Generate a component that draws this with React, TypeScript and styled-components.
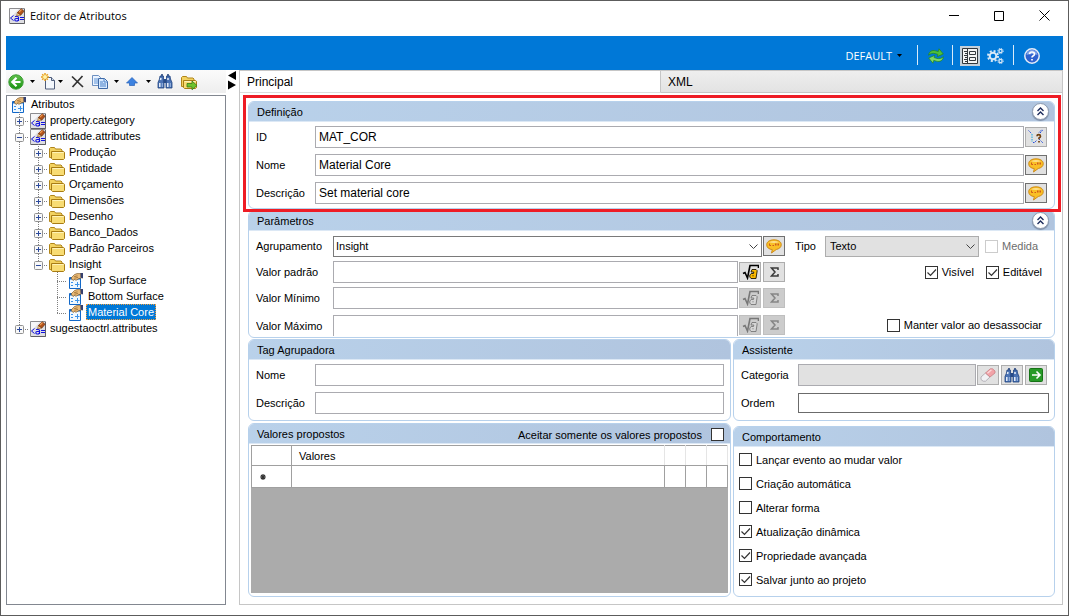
import React, { useState } from "react";
import styled, { createGlobalStyle } from "styled-components";

const uiFont = `"Liberation Sans", Arial, sans-serif`;
const titleFont = `"Open Sans", "Noto Sans", sans-serif`;

const GlobalStyle = createGlobalStyle`
  * { box-sizing: border-box; }
  body { margin: 0; background: #fff; color: #000; font: 11px/16px ${uiFont}; }
  button, input, select { font: inherit; color: inherit; margin: 0; padding: 0; border-radius: 0; }
  svg { display: block; flex: none; }
`;

/* ---------- window frame ---------- */

const Window = styled.div`
  display: flex;
  flex-direction: column;
  min-height: 100vh;
  padding: 0 5px 10px;
  border: 1px solid #5c5c5c;
  background: #fff;
`;

const TitleBar = styled.header`
  display: flex;
  align-items: center;
  height: 35px;
  padding: 0 8px 6px 3px;
`;

const Title = styled.h1`
  flex: 1;
  margin: 0 0 0 5px;
  font: 11px/16px ${titleFont};
`;

const WindowButtons = styled.div`
  display: flex;
  gap: 23px;
`;

const PlainButton = styled.button<{ $w?: number }>`
  display: flex;
  align-items: center;
  justify-content: center;
  width: ${(p) => (p.$w ? `${p.$w}px` : "auto")};
  border: 0;
  background: none;
`;

const Ribbon = styled.div`
  display: flex;
  align-items: center;
  justify-content: flex-end;
  height: 34px;
  padding: 5px 23px 0 0;
  background: #0078d7;
  color: #fff;
`;

const ProfileButton = styled(PlainButton)`
  gap: 5px;
  margin-right: 15px;
  font: 11px/16px ${titleFont};
`;

const RibbonDivider = styled.span<{ $before: number; $after: number }>`
  width: 1px;
  height: 20px;
  margin: 0 ${(p) => p.$after}px 2px ${(p) => p.$before}px;
  background: #d9ebf9;
`;

const RibbonToggle = styled(PlainButton)`
  width: 20px;
  height: 20px;
  margin-right: 7px;
  background: #c5d0da;
`;

const Workspace = styled.main`
  display: flex;
  flex: 1;
  align-items: stretch;
`;

/* ---------- left side ---------- */

const SidePane = styled.aside`
  display: flex;
  flex-direction: column;
  width: 220px;
`;

const SideToolbar = styled.div`
  display: flex;
  align-items: center;
  height: 23px;
  margin-bottom: 2px;
  padding-left: 2px;
  background: linear-gradient(#fbfbfb, #eeeeee);
`;

const ToolButton = styled(PlainButton)<{ $gap: number }>`
  margin-right: ${(p) => p.$gap}px;
`;

const Tree = styled.ul`
  flex: 1;
  margin: 0;
  padding: 0 0 0 3px;
  border: 1px solid #828790;
  list-style: none;
`;

const TreeRow = styled.li`
  display: flex;
  align-items: center;
  height: 16px;
`;

const TreeIcon = styled.span`
  width: 16px;
  height: 15px;
  margin: 1px 2px 0 1px;
`;

const TreeLabel = styled.span<{ $selected?: boolean }>`
  height: 16px;
  padding: 0 1px 0 1px;
  border: 1px ${(p) => (p.$selected ? "dotted #f0a040" : "solid transparent")};
  background: ${(p) => (p.$selected ? "#0078d7" : "none")};
  color: ${(p) => (p.$selected ? "#fff" : "#000")};
  line-height: 14px;
`;

const Splitter = styled.div`
  width: 13px;
  padding: 1px 0 0 1px;
`;

/* ---------- tabs ---------- */

const TabPane = styled.section`
  display: flex;
  flex: 1;
  flex-direction: column;
  min-width: 0;
  border: 1px solid #c6c6c6;
`;

const TabStrip = styled.div`
  display: grid;
  grid-template-columns: 421px 1fr;
  height: 22px;
`;

const Tab = styled.button<{ $active?: boolean }>`
  padding: 1px 7px 0;
  border: 0;
  border-right: ${(p) => (p.$active ? "1px solid #c6c6c6" : "0")};
  border-bottom: 1px solid ${(p) => (p.$active ? "#dcdcdc" : "#c6c6c6")};
  background: ${(p) => (p.$active ? "#fff" : "linear-gradient(#eeeeee, #e3e3e3)")};
  font-size: 12px;
  text-align: left;
`;

const TabPage = styled.div`
  display: flex;
  flex: 1;
  flex-direction: column;
  gap: 1px;
  padding: 8px 7px 7px 8px;
`;

/* ---------- groups ---------- */

const GroupBox = styled.section<{ $grow?: boolean }>`
  display: flex;
  flex: ${(p) => (p.$grow ? "1 1 auto" : "none")};
  flex-direction: column;
  border: 1px solid #b7d1ec;
  border-radius: 6px;
`;

const GroupHeader = styled.header`
  display: flex;
  align-items: center;
  justify-content: space-between;
  height: 20px;
  padding: 0 5px 0 8px;
  border-bottom: 1px solid #dce8f5;
  border-radius: 5px 5px 0 0;
  background: linear-gradient(90deg, #b9d1ea, #b0c4de);
`;

const GroupTitle = styled.h2`
  margin: 0;
  font: inherit;
`;

const CollapseButton = styled.button`
  display: flex;
  align-items: center;
  justify-content: center;
  width: 17px;
  height: 17px;
  border: 1px solid #8d9bb0;
  border-radius: 50%;
  background: #fff;
  box-shadow: 0 1px 1px #7c8ca4;
`;

const GroupBody = styled.div<{ $pad: string; $gap?: number }>`
  display: flex;
  flex: 1;
  flex-direction: column;
  gap: ${(p) => p.$gap ?? 0}px;
  padding: ${(p) => p.$pad};
`;

const HighlightArea = styled.div`
  position: relative;
`;

const HighlightFrame = styled.div`
  position: absolute;
  z-index: 1;
  inset: -6px -6px -3px -5px;
  border: 3px solid #ee1c25;
  pointer-events: none;
`;

const Row = styled.div<{ $gap?: number; $inset?: number }>`
  display: flex;
  align-items: center;
  height: 22px;
  margin-bottom: ${(p) => p.$gap ?? 0}px;
  padding-right: ${(p) => p.$inset ?? 0}px;
`;

const CutRow = styled(Row)`
  align-items: flex-start;
  height: 21px;
  overflow: hidden;
`;

const FieldLabel = styled.label<{ $w: number }>`
  flex: none;
  width: ${(p) => p.$w}px;
  line-height: 22px;
`;

const TextField = styled.input<{ $dark?: boolean }>`
  flex: 1;
  min-width: 0;
  height: 22px;
  padding: 0 3px;
  border: 1px solid ${(p) => (p.$dark ? "#6b6b6b" : "#ababb0")};
  background: #fff;
  font-size: 12px;
  outline: none;
  &:disabled { background: #e1e1e1; }
`;

const ShortField = styled(TextField)`
  height: 20px;
`;

const IconButton = styled.button<{ $dark?: boolean; $gap?: number }>`
  display: flex;
  flex: none;
  align-items: center;
  justify-content: center;
  width: 22px;
  height: 20px;
  margin-left: ${(p) => p.$gap ?? 1}px;
  border: 1px solid ${(p) => (p.$dark ? "#707070" : "#adadad")};
  background: #e1e1e1;
  &:disabled { border-color: #bfbfbf; background: #cccccc; }
`;

const SelectWrap = styled.span<{ $w?: number }>`
  display: grid;
  flex: ${(p) => (p.$w ? "none" : "1")};
  width: ${(p) => (p.$w ? `${p.$w}px` : "auto")};
  height: 21px;
  align-items: center;
  & > * { grid-area: 1 / 1; }
  & > svg { justify-self: end; margin-right: 3px; pointer-events: none; }
`;

const Select = styled.select<{ $gray?: boolean }>`
  width: 100%;
  height: 21px;
  padding: 0 20px 0 ${(p) => (p.$gray ? 4 : 2)}px;
  border: 1px solid ${(p) => (p.$gray ? "#adadad" : "#7a7a7a")};
  background: ${(p) => (p.$gray ? "#e1e1e1" : "#fff")};
  appearance: none;
`;

const ParamSide = styled.div`
  display: flex;
  flex: none;
  align-items: center;
  width: 269px;
  padding-left: 10px;
`;

const ParamChecks = styled(ParamSide)`
  height: 20px;
  justify-content: flex-end;
  padding-right: 12px;
`;

const CheckLabel = styled.label<{ $gap?: number; $muted?: boolean }>`
  display: flex;
  align-items: center;
  gap: 4px;
  height: 13px;
  margin-left: ${(p) => p.$gap ?? 0}px;
  color: ${(p) => (p.$muted ? "#6d6d6d" : "#000")};
`;

const CheckSlot = styled.span`
  display: grid;
  width: 13px;
  height: 13px;
  & > * { grid-area: 1 / 1; }
  & > svg { pointer-events: none; }
`;

const CheckInput = styled.input`
  width: 13px;
  height: 13px;
  border: 1px solid #333;
  background: #fff;
  appearance: none;
  &:disabled { border-color: #cccccc; }
`;

const LowerGrid = styled.div`
  display: grid;
  flex: 1;
  grid-template-columns: 483fr 322fr;
  gap: 2px;
`;

const LowerColumn = styled.div<{ $gap: number }>`
  display: flex;
  flex-direction: column;
  gap: ${(p) => p.$gap}px;
`;

const GridSurface = styled.div`
  flex: 1;
  background: #ababab;
`;

const DataTable = styled.table`
  width: 100%;
  table-layout: fixed;
  border-collapse: collapse;
  background: #fff;
  th { height: 20px; padding: 0 7px; border: 1px solid #a0a0a0; font-weight: 400; text-align: left; }
  th:nth-child(n + 3) { border-right-color: #e5e5e5; border-left-color: #e5e5e5; }
  th:nth-child(2) { border-right-color: #e5e5e5; }
  td { height: 22px; padding: 0 7px; border: 1px solid #a0a0a0; }
`;

/* ---------- icons ---------- */

const Caret = () => (
  <svg width="5" height="3" viewBox="0 0 5 3"><path d="M0 0h5L2.500 3z" fill="#000" /></svg>
);

const Chevron = () => (
  <svg width="11" height="7" viewBox="0 0 11 7"><path d="M1.500 1.500l4 4 4-4" fill="none" stroke="#444" /></svg>
);

const AttrFileIcon = () => (
  <svg width="16" height="16" viewBox="0 0 16 16">
    <path d="M.5 .5h15v15H.5z" fill="#dedee2" stroke="#8c8c90" />
    <path d="M15.500 1v14.500H1" fill="none" stroke="#5f5f63" />
    <path d="M1 1h9L2 9H1z" fill="#f6f6f8" />
    <path d="M4.500 7.500l-3 2.500 3 2.500M11 9.500h4M11 11.500h4" fill="none" stroke="#1212e0" />
    <path d="M6 8.500h2.500q1 0 1 1v3.500M9.500 10.500H7q-1.200 0-1.200 1.200T7 13h1.500l1-1" fill="none" stroke="#1212e0" strokeWidth="1.100" />
    <path d="M7.500 8l1-3.500L12 7z" fill="#f3c98b" stroke="#8a5a2a" strokeWidth=".6" />
    <path d="M8.500 4.500L12.200 .8 15 3.300 11.800 7z" fill="#b4541a" stroke="#6b2f0c" strokeWidth=".8" />
    <path d="M10 4l2.500-2.500" stroke="#ef9a52" strokeWidth="1.200" />
  </svg>
);

const PropertyIcon = () => (
  <svg width="16" height="16" viewBox="0 0 16 16">
    <path d="M1.500 4.500h11v11h-11z" fill="#eff8ff" stroke="#1268c8" />
    <path d="M2 5.500h10" stroke="#1268c8" strokeWidth="2" />
    <path d="M3 9.500h2M3 12.500h2M7 11.500h4.500M9.500 9v5" stroke="#3a93ea" />
    <path d="M3 5L6.500 1.500 9 .6h4l.5 4.400-3 .8-2.500 1.500-1.500-.8L5 7.500z" fill="#e9ba78" stroke="#6f4b1d" strokeWidth=".6" />
    <path d="M12.500 0H15v5.500l-2.500-1z" fill="#35406f" />
    <path d="M6 3.800l3.500-1M6.500 5.300l3.500-1" stroke="#8f6127" strokeWidth=".7" />
  </svg>
);

const FolderIcon = ({ arrow }: { arrow?: boolean }) => (
  <svg width="16" height="16" viewBox="0 0 16 16">
    <path d="M.5 12.500v-9l1-1h4l1 1.500H12l1 1v8.500z" fill="#f3d260" stroke="#b0851a" />
    <path d="M2.500 6.500h12l1 .8v6.200l-1 1h-11l-1-1z" fill="#f8dc74" stroke="#a87c14" />
    <path d="M3.500 7.500h11" stroke="#fff3b8" />
    {arrow && <path d="M6 9.500h5V7l5 4.500-5 4.300V13H6z" fill="#6ec32c" stroke="#38761a" strokeWidth=".8" />}
  </svg>
);

const BackIcon = () => (
  <svg width="16" height="16" viewBox="0 0 16 16">
    <defs><linearGradient id="back" x1="0" y1="0" x2="0" y2="1"><stop offset="0" stopColor="#62c04d" /><stop offset="1" stopColor="#17930f" /></linearGradient></defs>
    <circle cx="8" cy="8" r="7.200" fill="url(#back)" stroke="#3a9c33" />
    <path d="M8.500 3.800L4.300 8l4.200 4.200M4.800 8H12.500" fill="none" stroke="#fff" strokeWidth="2.200" />
  </svg>
);

const NewIcon = () => (
  <svg width="16" height="17" viewBox="0 0 16 17">
    <path d="M4.500 4.500h6l3 3v8.500h-9z" fill="#f4f8fd" stroke="#4f5d7a" />
    <path d="M10.500 4.500v3h3" fill="#cfdced" stroke="#4f5d7a" />
    <path d="M4 0v8M0 4h8M1.200 1.200l5.600 5.600M6.800 1.200L1.200 6.800" stroke="#e9a11d" strokeWidth="1.500" />
    <circle cx="4" cy="4" r="2" fill="#fff3a8" />
  </svg>
);

const DeleteIcon = () => (
  <svg width="13" height="13" viewBox="0 0 13 13"><path d="M1 1.500L12 12M11.500 1L1.500 12" stroke="#333" strokeWidth="1.700" /></svg>
);

const CopyIcon = () => (
  <svg width="16" height="14" viewBox="0 0 16 14">
    <path d="M.5.5h6l2 2v8h-8z" fill="#eaf3ff" stroke="#6c8fc0" />
    <path d="M2 4h4M2 6h4M2 8h4" stroke="#5f94d6" />
    <path d="M6.500 3.500h6l3 3v7h-9z" fill="#d8eaff" stroke="#3f69a5" />
    <path d="M12 3.500v3.500h3.500M8 7h3M8 9h6M8 11h6" fill="none" stroke="#4b80c6" />
  </svg>
);

const UpIcon = () => (
  <svg width="12" height="9" viewBox="0 0 12 9">
    <path d="M6 .5L11.500 6H8.500v2.500h-5V6H.5z" fill="#3c82e0" stroke="#2560b8" strokeWidth=".7" />
  </svg>
);

const BinocularsIcon = () => (
  <svg width="16" height="15" viewBox="0 0 16 15">
    <path d="M3 2h3.500v3L7 7v7H1V8.500L2.500 5zM9.500 2H13l.5 3L15 8.500V14H9V7l.5-2z" fill="#4a72b4" stroke="#1f427f" strokeWidth=".8" />
    <path d="M6.500 5h3v4h-3z" fill="#274b88" />
    <path d="M4 1h2M10 1h2" stroke="#1b3d78" strokeWidth="1.500" />
    <path d="M2.800 9v4M10.800 9v4M4 4L3.500 6M11 4v2" stroke="#e8f0fc" strokeWidth="1.500" />
    <path d="M5.300 9v4M13.300 9v4" stroke="#9db8e2" />
  </svg>
);

const RefreshIcon = () => (
  <svg width="16" height="16" viewBox="0 0 16 16">
    <path d="M.6 7.200C1 3.500 4 1.800 7.500 2.800L10.300 3.600 11 .8 15.300 6 9.300 8.600 9.900 6.400 7 5.600C4.600 5 2.600 5.500 .6 7.200z" fill="#4fbf3c" stroke="#23871a" strokeWidth=".7" />
    <path d="M15.400 8.800C15 12.500 12 14.200 8.500 13.200L5.700 12.400 5 15.200 .7 10 6.700 7.400 6.100 9.600 9 10.400C11.400 11 13.400 10.500 15.400 8.800z" fill="#7ed867" stroke="#23871a" strokeWidth=".7" />
  </svg>
);

const PanelIcon = () => (
  <svg width="16" height="16" viewBox="0 0 16 16">
    <path d="M.5.5h15v15H.5z" fill="#f4f4f4" stroke="#33383d" />
    <path d="M5.500 1v14" stroke="#33383d" />
    <path d="M2 3.500h3M3 5.500h2M2 7.500h3M3 9.500h2M2 11.500h3M3 13.500h2" stroke="#33383d" />
    <path d="M7.500 3.500h6v3h-6zM7.500 9.500h6v3h-6z" fill="none" stroke="#33383d" />
  </svg>
);

const GearsIcon = () => (
  <svg width="17" height="16" viewBox="0 0 17 16" fill="none" stroke="#d9e9f7">
    <circle cx="6" cy="8" r="3.300" strokeWidth="2" />
    <circle cx="6" cy="8" r="5" strokeWidth="2" strokeDasharray="2 1.930" />
    <circle cx="13.500" cy="3" r="1.600" strokeWidth="1.300" />
    <circle cx="13.500" cy="3" r="2.700" strokeWidth="1" strokeDasharray="1.100 1.020" />
    <circle cx="13.500" cy="13" r="1.600" strokeWidth="1.300" />
    <circle cx="13.500" cy="13" r="2.700" strokeWidth="1" strokeDasharray="1.100 1.020" />
  </svg>
);

const HelpIcon = () => (
  <svg width="16" height="16" viewBox="0 0 16 16">
    <circle cx="8" cy="8" r="7.200" fill="#2f62cf" stroke="#e4ecf8" strokeWidth="1.500" />
    <path d="M2.500 7a5.500 5 0 0 1 11 0q-5.500-2-11 0z" fill="#7ea4ea" />
    <path d="M5.500 6.200Q5.700 4 8 4t2.500 2q0 1.200-1.500 2-1 .6-1 1.500M8 11v1.600" fill="none" stroke="#fff" strokeWidth="1.700" />
  </svg>
);

const DoubleUpIcon = () => (
  <svg width="7" height="9" viewBox="0 0 7 9"><path d="M.5 4l3-3 3 3M.5 8l3-3 3 3" fill="none" stroke="#1d2c5c" strokeWidth="1.400" /></svg>
);

const BalloonIcon = () => (
  <svg width="16" height="15" viewBox="0 0 16 15">
    <path d="M8 .8c4.300 0 7.300 2 7.300 4.900 0 2.600-2.300 4.300-5 4.800L5.500 14l.8-3.400C3 10.300.7 8.500.7 5.700.7 2.800 3.700.8 8 .8z" fill="#f9bf27" stroke="#c98512" strokeWidth=".9" />
    <path d="M3 3.300Q8 .8 13 3.300 8 4.500 3 3.300z" fill="#fde08a" />
    <path d="M3.500 4.500v2H5M6.500 6.500H8M9.500 4.500v2M11 4.500v2M12.500 4.500v2" fill="none" stroke="#cf5a1c" />
  </svg>
);

const FormulaHelpIcon = () => (
  <svg width="16" height="16" viewBox="0 0 16 16" fill="none">
    <path d="M.5 1.500l3 3M5 13.500h1.500L9 11M11 3.500l3-3M12 4l3-3M11 10l4 4" stroke="#2951dd" strokeDasharray="1.500 .8" />
    <path d="M4 5v8" stroke="#15a6e0" strokeDasharray="1.500 1" />
    <path d="M9 7.200Q9 5.700 10.700 5.700T12.500 7.300Q12.500 8.500 11 9v1.300M11 12v1.500" stroke="#70400f" strokeWidth="1.700" />
  </svg>
);

const RootIcon = ({ off }: { off?: boolean }) => (
  <svg width="17" height="16" viewBox="0 0 17 16">
    <path d="M1 9.500l2-1L5.500 14 8 1.500h8.500V4" fill="none" stroke={off ? "#777" : "#000"} strokeWidth="1.600" />
    <path d="M10 5.500h4l1.200 1.200-1.200 7.800H9L7.800 13V11l1.400-1.500h2.300l.3-1.500H9z" fill={off ? "#d6d6d6" : "#f9b900"} stroke={off ? "#777" : "#1b1300"} strokeWidth=".9" />
    <path d="M10.500 11.800h1" stroke={off ? "#777" : "#1b1300"} />
  </svg>
);

const SigmaIcon = ({ off }: { off?: boolean }) => (
  <svg width="9" height="10" viewBox="0 0 9 10">
    <path d="M8 3V1H1.500L5 5 1.500 9H8V7" fill="none" stroke={off ? "#858585" : "#3a3a3a"} strokeWidth="1.500" />
  </svg>
);

const EraserIcon = () => (
  <svg width="16" height="14" viewBox="0 0 16 14">
    <path d="M1 9l4.500-4 4.500 4-4.500 4.200H3.200L1 11.500z" fill="#f1f1f4" stroke="#a8a4ac" strokeWidth=".8" />
    <path d="M5.500 5L10.300.8h2.200L15 3v2L10 9z" fill="#f2a3a8" stroke="#c98085" strokeWidth=".8" />
    <path d="M7.500 5.200l4-3.400" stroke="#fbd7da" strokeWidth="1.300" />
  </svg>
);

const GoIcon = () => (
  <svg width="14" height="14" viewBox="0 0 14 14">
    <rect x=".5" y=".5" width="13" height="13" rx="1" fill="#279a27" stroke="#167316" />
    <path d="M3 7h7.500M7.500 3.500L11 7l-3.500 3.500" fill="none" stroke="#fff" strokeWidth="1.600" />
  </svg>
);

const CheckMark = () => (
  <svg width="13" height="13" viewBox="0 0 13 13"><path d="M2.500 6.500l3 3 5.500-6" fill="none" stroke="#333" strokeWidth="1.200" /></svg>
);

/* ---------- tree ---------- */

type Cell = "none" | "line" | "plus" | "minus" | "plusEnd" | "minusEnd" | "tee" | "end";
type Node = { label: string; icon: "file" | "folder" | "prop"; cells: Cell[]; selected?: boolean };

const folder = (label: string): Node => ({ label, icon: "folder", cells: ["line", "plus"] });

const nodes: Node[] = [
  { label: "Atributos", icon: "prop", cells: [] },
  { label: "property.category", icon: "file", cells: ["plus"] },
  { label: "entidade.attributes", icon: "file", cells: ["minus"] },
  folder("Produção"),
  folder("Entidade"),
  folder("Orçamento"),
  folder("Dimensões"),
  folder("Desenho"),
  folder("Banco_Dados"),
  folder("Padrão Parceiros"),
  { label: "Insight", icon: "folder", cells: ["line", "minusEnd"] },
  { label: "Top Surface", icon: "prop", cells: ["line", "none", "tee"] },
  { label: "Bottom Surface", icon: "prop", cells: ["line", "none", "tee"] },
  { label: "Material Core", icon: "prop", cells: ["line", "none", "end"], selected: true },
  { label: "sugestaoctrl.attributes", icon: "file", cells: ["plusEnd"] },
];

const TreeCell = ({ kind }: { kind: Cell }) => {
  const boxed = kind.startsWith("plus") || kind.startsWith("minus");
  const stops = kind === "end" || kind.endsWith("End");
  return (
    <svg width="19" height="16" viewBox="0 0 19 16" fill="none">
      {kind !== "none" && <path d={stops ? "M9.500 0v9" : "M9.500 0v16"} stroke="#808080" strokeDasharray="1 1" />}
      {kind !== "none" && kind !== "line" && <path d="M9 9.500h10" stroke="#808080" strokeDasharray="1 1" />}
      {boxed && <rect x="5.500" y="5.500" width="8" height="8" rx="1" fill="#f8f8f8" stroke="#919191" />}
      {boxed && <path d={kind.startsWith("plus") ? "M7 9.500h5M9.500 7v5" : "M7 9.500h5"} stroke="#2c4a9c" />}
    </svg>
  );
};

/* ---------- small composed controls ---------- */

const Check = ({ label, on, off, gap }: { label: string; on?: boolean; off?: boolean; gap?: number }) => {
  const [checked, setChecked] = useState(!!on);
  return (
    <CheckLabel $gap={gap} $muted={off}>
      <CheckSlot>
        <CheckInput type="checkbox" checked={checked} disabled={off} onChange={() => setChecked(!checked)} />
        {checked && <CheckMark />}
      </CheckSlot>
      {label}
    </CheckLabel>
  );
};

const Group = ({ title, pad, gap, grow, collapsible, extra, children }: {
  title: string; pad: string; gap?: number; grow?: boolean; collapsible?: boolean; extra?: React.ReactNode; children: React.ReactNode;
}) => (
  <GroupBox $grow={grow}>
    <GroupHeader>
      <GroupTitle>{title}</GroupTitle>
      {extra}
      {collapsible && <CollapseButton aria-label={`Recolher ${title}`}><DoubleUpIcon /></CollapseButton>}
    </GroupHeader>
    <GroupBody $pad={pad} $gap={gap}>{children}</GroupBody>
  </GroupBox>
);

const LimitButtons = ({ off }: { off?: boolean }) => (
  <>
    <IconButton disabled={off} aria-label="Fórmula"><RootIcon off={off} /></IconButton>
    <IconButton disabled={off} aria-label="Somatório" $gap={2}><SigmaIcon off={off} /></IconButton>
  </>
);

const HeaderCheck = styled.label`
  display: flex;
  align-items: center;
  gap: 9px;
  padding: 2px 1px 0 0;
`;

export default function App() {
  return (
    <Window>
      <GlobalStyle />
      <TitleBar>
        <AttrFileIcon />
        <Title>Editor de Atributos</Title>
        <WindowButtons>
          <PlainButton $w={22} aria-label="Minimizar"><svg width="10" height="11" viewBox="0 0 10 11"><path d="M0 5.500h10" stroke="#000" /></svg></PlainButton>
          <PlainButton $w={22} aria-label="Maximizar"><svg width="10" height="10" viewBox="0 0 10 10"><path d="M.5.5h9v9h-9z" fill="none" stroke="#000" /></svg></PlainButton>
          <PlainButton $w={22} aria-label="Fechar"><svg width="11" height="11" viewBox="0 0 11 11"><path d="M.5.5l10 10M10.500.5l-10 10" stroke="#000" /></svg></PlainButton>
        </WindowButtons>
      </TitleBar>

      <Ribbon>
        <ProfileButton>DEFAULT <Caret /></ProfileButton>
        <RibbonDivider $before={0} $after={10} />
        <PlainButton aria-label="Atualizar"><RefreshIcon /></PlainButton>
        <RibbonDivider $before={8} $after={7} />
        <RibbonToggle aria-label="Painel"><PanelIcon /></RibbonToggle>
        <PlainButton aria-label="Configurações"><GearsIcon /></PlainButton>
        <RibbonDivider $before={9} $after={10} />
        <PlainButton aria-label="Ajuda"><HelpIcon /></PlainButton>
      </Ribbon>

      <Workspace>
        <SidePane>
          <SideToolbar>
            <ToolButton $gap={6} aria-label="Voltar"><BackIcon /></ToolButton>
            <ToolButton $gap={6} aria-label="Opções de voltar"><Caret /></ToolButton>
            <ToolButton $gap={1} aria-label="Novo"><NewIcon /></ToolButton>
            <ToolButton $gap={8} aria-label="Opções de novo"><Caret /></ToolButton>
            <ToolButton $gap={8} aria-label="Excluir"><DeleteIcon /></ToolButton>
            <ToolButton $gap={6} aria-label="Copiar"><CopyIcon /></ToolButton>
            <ToolButton $gap={7} aria-label="Opções de copiar"><Caret /></ToolButton>
            <ToolButton $gap={8} aria-label="Subir"><UpIcon /></ToolButton>
            <ToolButton $gap={6} aria-label="Opções de subir"><Caret /></ToolButton>
            <ToolButton $gap={8} aria-label="Localizar"><BinocularsIcon /></ToolButton>
            <ToolButton $gap={0} aria-label="Abrir pasta"><FolderIcon arrow /></ToolButton>
          </SideToolbar>
          <Tree>
            {nodes.map((n) => (
              <TreeRow key={n.label}>
                {n.cells.map((c, i) => <TreeCell key={i} kind={c} />)}
                <TreeIcon>
                  {n.icon === "file" ? <AttrFileIcon /> : n.icon === "folder" ? <FolderIcon /> : <PropertyIcon />}
                </TreeIcon>
                <TreeLabel $selected={n.selected}>{n.label}</TreeLabel>
              </TreeRow>
            ))}
          </Tree>
        </SidePane>

        <Splitter>
          <svg width="10" height="19" viewBox="0 0 10 19"><path d="M9 0v9L1 4.500zM1 9.500L9 14 1 18.500z" fill="#000" /></svg>
        </Splitter>

        <TabPane>
          <TabStrip role="tablist">
            <Tab role="tab" aria-selected $active>Principal</Tab>
            <Tab role="tab" aria-selected={false}>XML</Tab>
          </TabStrip>
          <TabPage>
            <HighlightArea>
              <Group title="Definição" pad="4px 7px" gap={6} collapsible>
                <Row>
                  <FieldLabel $w={59} htmlFor="id">ID</FieldLabel>
                  <TextField id="id" defaultValue="MAT_COR" />
                  <IconButton aria-label="Fórmula do ID"><FormulaHelpIcon /></IconButton>
                </Row>
                <Row>
                  <FieldLabel $w={59} htmlFor="nome">Nome</FieldLabel>
                  <TextField id="nome" defaultValue="Material Core" />
                  <IconButton $dark aria-label="Traduzir nome"><BalloonIcon /></IconButton>
                </Row>
                <Row>
                  <FieldLabel $w={59} htmlFor="descricao">Descrição</FieldLabel>
                  <TextField id="descricao" defaultValue="Set material core" />
                  <IconButton $dark aria-label="Traduzir descrição"><BalloonIcon /></IconButton>
                </Row>
              </Group>
              <HighlightFrame />
            </HighlightArea>

            <Group title="Parâmetros" pad="4px 0 1px 7px" collapsible>
              <Row $gap={4}>
                <FieldLabel $w={77} htmlFor="agrupamento">Agrupamento</FieldLabel>
                <SelectWrap>
                  <Select id="agrupamento"><option>Insight</option></Select>
                  <Chevron />
                </SelectWrap>
                <IconButton $dark aria-label="Traduzir agrupamento"><BalloonIcon /></IconButton>
                <ParamSide>
                  <FieldLabel $w={30} htmlFor="tipo">Tipo</FieldLabel>
                  <SelectWrap $w={154}>
                    <Select id="tipo" $gray><option>Texto</option></Select>
                    <Chevron />
                  </SelectWrap>
                  <Check label="Medida" off gap={6} />
                </ParamSide>
              </Row>
              <Row $gap={4}>
                <FieldLabel $w={77} htmlFor="padrao">Valor padrão</FieldLabel>
                <TextField id="padrao" />
                <LimitButtons />
                <ParamChecks>
                  <Check label="Visível" on />
                  <Check label="Editável" on gap={12} />
                </ParamChecks>
              </Row>
              <Row $gap={6}>
                <FieldLabel $w={77} htmlFor="minimo">Valor Mínimo</FieldLabel>
                <TextField id="minimo" />
                <LimitButtons off />
                <ParamChecks />
              </Row>
              <CutRow>
                <FieldLabel $w={77} htmlFor="maximo">Valor Máximo</FieldLabel>
                <TextField id="maximo" />
                <LimitButtons off />
                <ParamChecks>
                  <Check label="Manter valor ao desassociar" />
                </ParamChecks>
              </CutRow>
            </Group>

            <LowerGrid>
              <LowerColumn $gap={2}>
                <Group title="Tag Agrupadora" pad="4px 6px 6px 7px" gap={6}>
                  <Row>
                    <FieldLabel $w={59} htmlFor="tag-nome">Nome</FieldLabel>
                    <TextField id="tag-nome" />
                  </Row>
                  <Row>
                    <FieldLabel $w={59} htmlFor="tag-descricao">Descrição</FieldLabel>
                    <TextField id="tag-descricao" />
                  </Row>
                </Group>
                <Group
                  title="Valores propostos"
                  pad="1px 2px 3px"
                  grow
                  extra={
                    <HeaderCheck>
                      Aceitar somente os valores propostos
                      <CheckInput type="checkbox" />
                    </HeaderCheck>
                  }
                >
                  <GridSurface>
                    <DataTable>
                      <colgroup>
                        <col style={{ width: 40 }} /><col /><col style={{ width: 21 }} /><col style={{ width: 21 }} /><col style={{ width: 21 }} />
                      </colgroup>
                      <thead>
                        <tr><th /><th>Valores</th><th /><th /><th /></tr>
                      </thead>
                      <tbody>
                        <tr>
                          <td><svg width="8" height="8" viewBox="0 0 8 8"><path d="M4 1v6M1 4h6M2 2l4 4M6 2L2 6" stroke="#333" strokeWidth="1.200" /></svg></td>
                          <td /><td /><td /><td />
                        </tr>
                      </tbody>
                    </DataTable>
                  </GridSurface>
                </Group>
              </LowerColumn>

              <LowerColumn $gap={5}>
                <Group title="Assistente" pad="4px 5px 6px 7px" gap={6}>
                  <Row $inset={2}>
                    <FieldLabel $w={57} htmlFor="categoria">Categoria</FieldLabel>
                    <TextField id="categoria" disabled />
                    <IconButton aria-label="Limpar"><EraserIcon /></IconButton>
                    <IconButton aria-label="Localizar categoria" $gap={2}><BinocularsIcon /></IconButton>
                    <IconButton aria-label="Ir para categoria" $gap={2}><GoIcon /></IconButton>
                  </Row>
                  <Row>
                    <FieldLabel $w={57} htmlFor="ordem">Ordem</FieldLabel>
                    <ShortField id="ordem" $dark />
                  </Row>
                </Group>
                <Group title="Comportamento" pad="6px 5px" gap={11} grow>
                  <Check label="Lançar evento ao mudar valor" />
                  <Check label="Criação automática" />
                  <Check label="Alterar forma" />
                  <Check label="Atualização dinâmica" on />
                  <Check label="Propriedade avançada" on />
                  <Check label="Salvar junto ao projeto" on />
                </Group>
              </LowerColumn>
            </LowerGrid>
          </TabPage>
        </TabPane>
      </Workspace>
    </Window>
  );
}
